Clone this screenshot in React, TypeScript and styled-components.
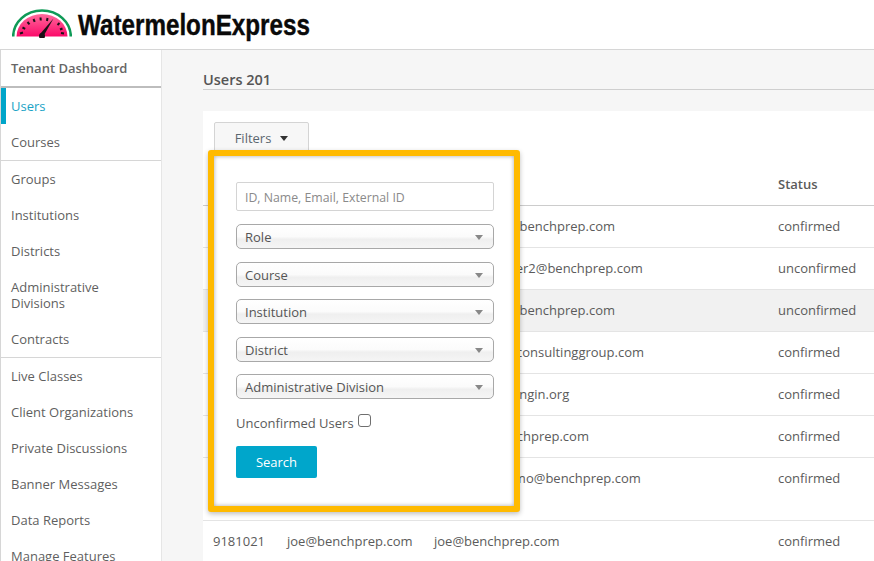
import React from "react";
import styled, { createGlobalStyle } from "styled-components";

const Global = createGlobalStyle`
  html, body { margin: 0; padding: 0; background: #fff; }
  body { font-family: "Open Sans", "Liberation Sans", sans-serif; font-size: 13px; color: #5b5b5b; }
`;

const Page = styled.div`
  width: 874px;
  height: 561px;
  overflow: hidden;
  display: flex;
  flex-direction: column;
`;

const Header = styled.header`
  flex: none;
  display: flex;
  align-items: flex-start;
  padding: 9px 0 0 12px;
  gap: 6px;
  border-bottom: 1px solid #d6d6d6;
  height: 40px;
`;

const Brand = styled.span`
  font-family: "Liberation Sans", Arial, sans-serif;
  font-weight: 700;
  font-size: 29px;
  line-height: 32px;
  color: #0a0a0a;
  display: inline-block;
  transform: scaleX(0.835);
  transform-origin: left center;
  white-space: nowrap;
  -webkit-text-stroke: 0.4px #0a0a0a;
`;

const Body = styled.div`
  flex: 1;
  display: flex;
  min-height: 0;
`;

const Sidebar = styled.nav`
  width: 161px;
  flex: none;
  box-sizing: border-box;
  background: #fff;
  border-left: 1px solid #d6d6d6;
  display: flex;
  flex-direction: column;
`;

const SideTitle = styled.div`
  height: 36px;
  flex: none;
  padding-left: 10px;
  font-weight: 600;
  color: #666;
  line-height: 37px;
  border-bottom: 2px solid #bdbdbd;
`;

const SideItem = styled.a<{ $active?: boolean; $rule?: boolean; $two?: boolean }>`
  display: block;
  flex: none;
  box-sizing: border-box;
  min-height: ${(p) => (p.$rule ? "37px" : "36px")};
  line-height: ${(p) => (p.$two ? "16px" : "36px")};
  padding: ${(p) => (p.$two ? "10px" : "0 10px")};
  color: ${(p) => (p.$active ? "#1ba3c6" : "#5f5f5f")};
  border-left: ${(p) => (p.$active ? "5px solid #00a5c9" : "0")};
  padding-left: ${(p) => (p.$active ? "5px" : "10px")};
  border-bottom: ${(p) => (p.$rule ? "1px solid #d6d6d6" : "0")};
`;

const Main = styled.main`
  flex: 1;
  min-width: 0;
  background: #f6f6f6;
  border-left: 1px solid #e6e6e6;
  box-sizing: border-box;
  padding: 20px 0 0 41px;
  display: flex;
  flex-direction: column;
`;

const Title = styled.h1`
  margin: 0;
  font-size: 14.5px;
  font-weight: 600;
  line-height: 20px;
  color: #555;
  border-bottom: 1px solid #cfcfcf;
  height: 19px;
  flex: none;
`;

const Card = styled.section`
  position: relative;
  margin-top: 21px;
  flex: 1;
  background: #fff;
  padding-top: 11px;
`;

const FilterTab = styled.button`
  display: flex;
  align-items: center;
  justify-content: center;
  gap: 9px;
  margin-left: 11px;
  width: 95px;
  height: 32px;
  box-sizing: border-box;
  background: #f7f7f7;
  border: 1px solid #d4d4d4;
  border-radius: 2px;
  font: inherit;
  color: #5b6770;
  padding: 0;
`;

const Caret = styled.i<{ $color?: string }>`
  display: inline-block;
  width: 0;
  height: 0;
  border-left: 4.5px solid transparent;
  border-right: 4.5px solid transparent;
  border-top: 5px solid ${(p) => p.$color || "#333"};
`;

const Table = styled.div`
  margin-top: 10px;
`;

const Row = styled.div<{ $head?: boolean; $hover?: boolean; $h?: number }>`
  display: grid;
  grid-template-columns: 74px 147px 344px 1fr;
  padding-left: 10px;
  height: ${(p) => p.$h || 42}px;
  box-sizing: border-box;
  align-items: start;
  line-height: ${(p) => (p.$head ? "40px" : "41px")};
  font-weight: ${(p) => (p.$head ? 600 : 400)};
  background: ${(p) => (p.$hover ? "#f1f1f1" : "#fff")};
  border-bottom: 1px solid ${(p) => (p.$head ? "#cccccc" : "#e4e4e4")};
  white-space: nowrap;
`;

const Popover = styled.form`
  position: absolute;
  left: 5px;
  top: 39px;
  width: 312px;
  height: 362px;
  box-sizing: border-box;
  background: #fff;
  border: 6px solid #ffba00;
  border-radius: 3px;
  box-shadow: 0 2px 5px rgba(0, 0, 0, 0.25), inset 0 0 4px rgba(0, 0, 0, 0.35);
  padding: 26px 20px 0 22px;
  display: flex;
  flex-direction: column;
  align-items: stretch;
`;

const SearchInput = styled.input`
  height: 29px;
  flex: none;
  box-sizing: border-box;
  width: 258px;
  border: 1px solid #d4d4d4;
  border-radius: 2px;
  padding: 1px 8px 0;
  font: inherit;
  font-size: 12.3px;
  margin-bottom: 13px;
  outline: none;
  &::placeholder { color: #8a8a8a; opacity: 1; }
`;

const SelectBox = styled.div`
  width: 258px;
  height: 25px;
  flex: none;
  box-sizing: border-box;
  margin-bottom: 12.6px;
  border: 1px solid #a8a8a8;
  border-radius: 5px;
  background: linear-gradient(to bottom, #ffffff 0%, #fbfbfb 50%, #efefef 62%, #f5f5f5 100%);
  display: flex;
  align-items: center;
  justify-content: space-between;
  padding: 2px 10px 0 8px;
  color: #555;
  line-height: 21px;
`;

const CheckRow = styled.label`
  display: flex;
  align-items: center;
  gap: 4px;
  margin-top: 2px;
  height: 18px;
  flex: none;
  color: #5b5b5b;
`;

const Check = styled.input`
  appearance: none;
  width: 13px;
  height: 13px;
  margin: -4px 0 0;
  box-sizing: border-box;
  background: #fff;
  border: 1px solid #6f6f6f;
  border-radius: 3px;
`;

const SearchButton = styled.button`
  margin-top: 14px;
  width: 81px;
  height: 32px;
  flex: none;
  border: 0;
  border-radius: 2px;
  background: #00a6cb;
  color: #fff;
  font: inherit;
  padding: 0;
`;

const Logo = () => (
  <svg width="60" height="29" viewBox="0 0 60 29" style={{ flex: "none" }}>
    <defs>
      <linearGradient id="melon" x1="0" y1="0" x2="0" y2="1">
        <stop offset="0" stopColor="#ff6a9c" />
        <stop offset="1" stopColor="#fb0a6a" />
      </linearGradient>
    </defs>
    <path d="M1.2 27.5 A28.8 26 0 0 1 58.8 27.5" fill="none" stroke="#0f9a57" strokeWidth="2.6" />
    <path d="M4.5 27.5 A25.5 22.5 0 0 1 55.5 27.5 Z" fill="url(#melon)" />
    <g fill="none" stroke="#1a1016" strokeWidth="2">
      <path d="M8 24.5 L11 23.5" />
      <path d="M10.5 18.5 L13.2 19.8" />
      <path d="M15.5 13 L17.5 15.3" />
      <path d="M21.5 10 L22.7 12.8" />
      <path d="M28.5 8.5 L28.8 11.5" />
      <path d="M35.5 9 L35 12" />
      <path d="M47.5 14 L45.5 16" />
      <path d="M50.5 19.5 L48 20.5" />
      <path d="M52 24.5 L49 24" />
    </g>
    <path d="M28 25 L41.5 9.5 L31.5 27 Z" fill="#1a1016" />
    <circle cx="30" cy="27" r="3" fill="#1a1016" />
  </svg>
);

const sideItems: { label: string; active?: boolean; rule?: boolean; two?: boolean }[] = [
  { label: "Users", active: true },
  { label: "Courses", rule: true },
  { label: "Groups" },
  { label: "Institutions" },
  { label: "Districts" },
  { label: "Administrative Divisions", two: true },
  { label: "Contracts", rule: true },
  { label: "Live Classes" },
  { label: "Client Organizations" },
  { label: "Private Discussions" },
  { label: "Banner Messages" },
  { label: "Data Reports" },
  { label: "Manage Features" },
];

const rows = [
  { id: "9181028", a: "tenantuser", b: "tenantuser1@benchprep.com", s: "confirmed" },
  { id: "9181027", a: "learner2", b: "tenant1.learner2@benchprep.com", s: "unconfirmed" },
  { id: "9181026", a: "learner", b: "tenantuser3@benchprep.com", s: "unconfirmed", hover: true },
  { id: "9181025", a: "consultant", b: "memberjoe@consultinggroup.com", s: "confirmed" },
  { id: "9181024", a: "lmangin", b: "laurenm@lmangin.org", s: "confirmed" },
  { id: "9181023", a: "support", b: "support@benchprep.com", s: "confirmed" },
  { id: "9181022", a: "demo", b: "tenantuse.demo@benchprep.com", s: "confirmed", h: 63 },
  { id: "9181021", a: "joe@benchprep.com", b: "joe@benchprep.com", s: "confirmed" },
];

export default function App() {
  return (
    <Page>
      <Global />
      <Header>
        <Logo />
        <Brand>WatermelonExpress</Brand>
      </Header>
      <Body>
        <Sidebar>
          <SideTitle>Tenant Dashboard</SideTitle>
          {sideItems.map((s) => (
            <SideItem key={s.label} $active={s.active} $rule={s.rule} $two={s.two}>
              {s.label}
            </SideItem>
          ))}
        </Sidebar>
        <Main>
          <Title>Users 201</Title>
          <Card>
            <FilterTab type="button">
              Filters <Caret />
            </FilterTab>
            <Table>
              <Row $head>
                <span>ID</span>
                <span>Username</span>
                <span>Email</span>
                <span>Status</span>
              </Row>
              {rows.map((r) => (
                <Row key={r.id} $hover={r.hover} $h={r.h}>
                  <span>{r.id}</span>
                  <span>{r.a}</span>
                  <span>{r.b}</span>
                  <span>{r.s}</span>
                </Row>
              ))}
            </Table>
            <Popover>
              <SearchInput placeholder="ID, Name, Email, External ID" />
              {["Role", "Course", "Institution", "District", "Administrative Division"].map((l) => (
                <SelectBox key={l}>
                  {l}
                  <Caret $color="#888" />
                </SelectBox>
              ))}
              <CheckRow>
                Unconfirmed Users <Check type="checkbox" />
              </CheckRow>
              <SearchButton type="button">Search</SearchButton>
            </Popover>
          </Card>
        </Main>
      </Body>
    </Page>
  );
}
